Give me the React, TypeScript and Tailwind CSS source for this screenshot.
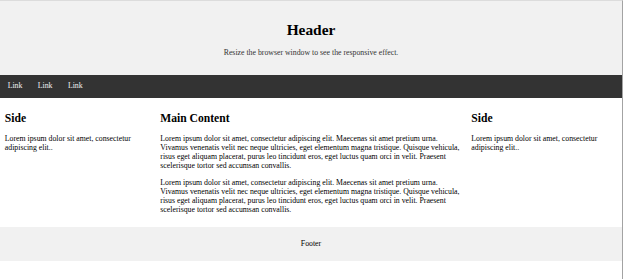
const lorem =
  'Lorem ipsum dolor sit amet, consectetur adipiscing elit. Maecenas sit amet pretium urna. Vivamus venenatis velit nec neque ultricies, eget elementum magna tristique. Quisque vehicula, risus eget aliquam placerat, purus leo tincidunt eros, eget luctus quam orci in velit. Praesent scelerisque tortor sed accumsan convallis.';

const serif = "font-['Liberation_Serif','Times_New_Roman',serif]";

function Side() {
  return (
    <div className="w-1/4 p-[4.8px]">
      <h2 className="my-[9.8px] text-[11.6px] font-bold leading-[1.15]">Side</h2>
      <p className="my-[7.8px] text-[7.8px] leading-[1.15]">
        Lorem ipsum dolor sit amet, consectetur adipiscing elit..
      </p>
    </div>
  );
}

export default function App() {
  return (
    <div className={`${serif} min-h-[279px] w-[623px] border-r border-t border-r-[#a3a3a3] border-t-[#dcdcdc] bg-white text-black`}>
      <div className="bg-[#f1f1f1] p-[9.6px] text-center">
        <h1 className="my-[10.3px] text-[15.4px] font-bold leading-[1.15]">Header</h1>
        <p className="my-[7.8px] text-[7.8px] leading-[1.15] text-[#333]">
          Resize the browser window to see the responsive effect.
        </p>
      </div>

      <nav className="flex bg-[#333]">
        {['Link', 'Link', 'Link'].map((label, i) => (
          <a key={i} href="#" className="block px-[7.7px] py-[6.7px] text-[7.8px] leading-[1.15] text-[#f2f2f2]">
            {label}
          </a>
        ))}
      </nav>

      <div className="flex items-start">
        <Side />
        <div className="w-1/2 p-[4.8px]">
          <h2 className="my-[9.8px] text-[11.6px] font-bold leading-[1.15]">Main Content</h2>
          <p className="my-[7.8px] text-[7.8px] leading-[1.15]">{lorem}</p>
          <p className="my-[7.8px] text-[7.8px] leading-[1.15]">{lorem}</p>
        </div>
        <Side />
      </div>

      <div className="bg-[#f1f1f1] p-[4.8px] text-center">
        <p className="my-[7.8px] text-[7.8px] leading-[1.15]">Footer</p>
      </div>
    </div>
  );
}
